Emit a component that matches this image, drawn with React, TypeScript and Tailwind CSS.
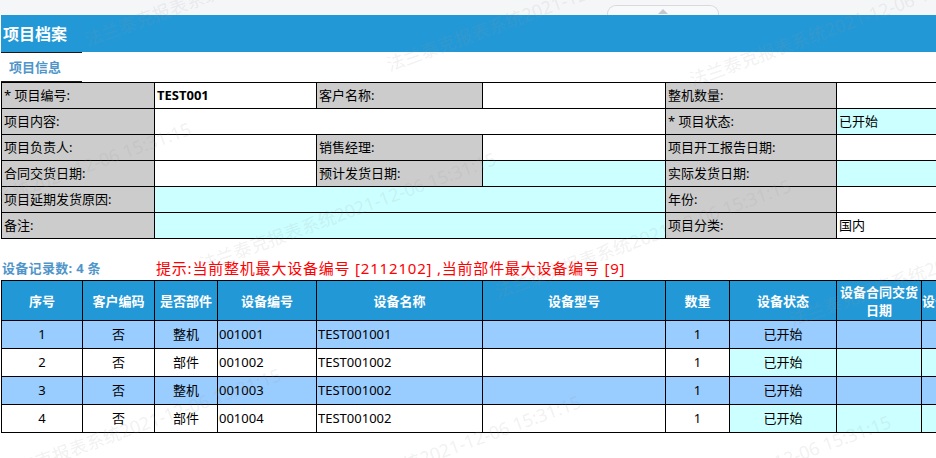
import React from "react";

type Cell = { t?: string; k: "l" | "v"; bg?: string; span?: string; b?: boolean };

const W = "bg-white";
const C = "bg-[#ccffff]";

const formRows: Cell[][] = [
  [
    { t: "* 项目编号:", k: "l" },
    { t: "TEST001", k: "v", bg: W, b: true },
    { t: "客户名称:", k: "l" },
    { k: "v", bg: W },
    { t: "整机数量:", k: "l" },
    { k: "v", bg: W },
  ],
  [
    { t: "项目内容:", k: "l" },
    { k: "v", bg: W, span: "col-span-3" },
    { t: "* 项目状态:", k: "l" },
    { t: "已开始", k: "v", bg: C },
  ],
  [
    { t: "项目负责人:", k: "l" },
    { k: "v", bg: W },
    { t: "销售经理:", k: "l" },
    { k: "v", bg: W },
    { t: "项目开工报告日期:", k: "l" },
    { k: "v", bg: W },
  ],
  [
    { t: "合同交货日期:", k: "l" },
    { k: "v", bg: W },
    { t: "预计发货日期:", k: "l" },
    { k: "v", bg: C },
    { t: "实际发货日期:", k: "l" },
    { k: "v", bg: C },
  ],
  [
    { t: "项目延期发货原因:", k: "l" },
    { k: "v", bg: C, span: "col-span-3" },
    { t: "年份:", k: "l" },
    { k: "v", bg: W },
  ],
  [
    { t: "备注:", k: "l" },
    { k: "v", bg: C, span: "col-span-3" },
    { t: "项目分类:", k: "l" },
    { t: "国内", k: "v", bg: W },
  ],
];

const headers = ["序号", "客户编码", "是否部件", "设备编号", "设备名称", "设备型号", "数量", "设备状态", "设备合同交货日期", "设备合同"];

const rows = [
  ["1", "否", "整机", "001001", "TEST001001"],
  ["2", "否", "部件", "001002", "TEST001002"],
  ["3", "否", "整机", "001003", "TEST001002"],
  ["4", "否", "部件", "001004", "TEST001002"],
];

const wm = "法兰泰克报表系统2021-12-06 15:31:15";
const marks: [string, string][] = [
  ["left-[85px]", "top-[30px]"],
  ["left-[387px]", "top-[55px]"],
  ["left-[690px]", "top-[70px]"],
  ["left-[-105px]", "top-[225px]"],
  ["left-[200px]", "top-[255px]"],
  ["left-[495px]", "top-[282px]"],
  ["left-[790px]", "top-[310px]"],
  ["left-[-15px]", "top-[471px]"],
  ["left-[285px]", "top-[498px]"],
  ["left-[595px]", "top-[518px]"],
];

export default function App() {
  return (
    <div className="relative w-[936px] h-[458px] overflow-hidden bg-white text-black font-['Noto_Sans','Noto_Sans_CJK_SC',sans-serif]">
      {/* top strip with collapse handle */}
      <div className="h-[15px] bg-[#f5f6f8] pl-[607px] pt-[5px]">
        <div className="w-[112px] h-[10px] rounded-t-[9px] border border-b-0 border-[#d6dade] bg-[#f8f9fa] flex justify-center pt-[3px]">
          <div className="w-0 h-0 border-l-[5px] border-r-[5px] border-b-[5px] border-l-transparent border-r-transparent border-b-[#c4c8cc]" />
        </div>
      </div>

      <div className="pl-[1px]">
        {/* title bar */}
        <div className="h-[37px] bg-[#2398d6] flex items-center pl-[2px] text-white text-[16px] font-bold leading-none">
          项目档案
        </div>

        {/* tab */}
        <div className="w-[81px] h-[30px] border-y border-[#1a1a1a] flex items-center pl-[8px] text-[13px] font-bold text-[#4f95c9] leading-none">
          项目信息
        </div>

        {/* form grid */}
        <div className="grid grid-cols-[152px_161px_165px_182px_170px_200px] auto-rows-[25px] gap-px bg-black p-px w-max text-[13px]">
          {formRows.flat().map((c, i) => (
            <div
              key={i}
              className={`flex items-center px-[2px] whitespace-nowrap leading-none ${c.k === "l" ? "bg-[#cccccc]" : c.bg} ${c.span ?? ""} ${c.b ? "font-bold" : ""}`}
            >
              {c.t}
            </div>
          ))}
        </div>

        {/* info line */}
        <div className="h-[41px] pt-[17px] flex items-center">
          <div className="w-[155px] pl-[1px] text-[13px] font-bold text-[#4f95c9] leading-none tracking-[0.3px]">设备记录数: 4 条</div>
          <div className="text-[15px] text-[#ff0000] leading-none whitespace-nowrap tracking-[0.8px]">
            提示:当前整机最大设备编号 [2112102] ,当前部件最大设备编号 [9]
          </div>
        </div>

        {/* equipment grid */}
        <div className="grid grid-cols-[80px_71px_62px_98px_165px_182px_63px_106px_84px_100px] grid-rows-[39px_27px_27px_27px_27px] gap-px bg-black p-px w-max text-[13px]">
          {headers.map((h, i) => (
            <div key={h} className={`bg-[#2398d6] text-white font-bold flex items-center justify-center text-center leading-[18px] ${i === 9 ? "justify-start" : ""}`}>
              {h}
            </div>
          ))}
          {rows.map((r, ri) => {
            const blue = ri % 2 === 0;
            const base = blue ? "bg-[#99ccff]" : "bg-white";
            const cyan = blue ? "bg-[#99ccff]" : "bg-[#ccffff]";
            return (
              <React.Fragment key={ri}>
                <div className={`${base} flex items-center justify-center leading-none`}>{r[0]}</div>
                <div className={`${base} flex items-center justify-center leading-none`}>{r[1]}</div>
                <div className={`${base} flex items-center justify-center leading-none`}>{r[2]}</div>
                <div className={`${base} flex items-center pl-[1px] leading-none`}>{r[3]}</div>
                <div className={`${base} flex items-center pl-[1px] leading-none`}>{r[4]}</div>
                <div className={base} />
                <div className={`${base} flex items-center justify-center leading-none`}>1</div>
                <div className={`${cyan} flex items-center justify-center leading-none`}>已开始</div>
                <div className={cyan} />
                <div className={cyan} />
              </React.Fragment>
            );
          })}
        </div>
      </div>

      {/* watermarks */}
      <div className="pointer-events-none absolute inset-0">
        {marks.map(([l, t], i) => (
          <span
            key={i}
            className={`absolute ${l} ${t} origin-left rotate-[-20deg] whitespace-nowrap text-[18px] leading-[20px] text-[#999999]/15`}
          >
            {wm}
          </span>
        ))}
      </div>
    </div>
  );
}
